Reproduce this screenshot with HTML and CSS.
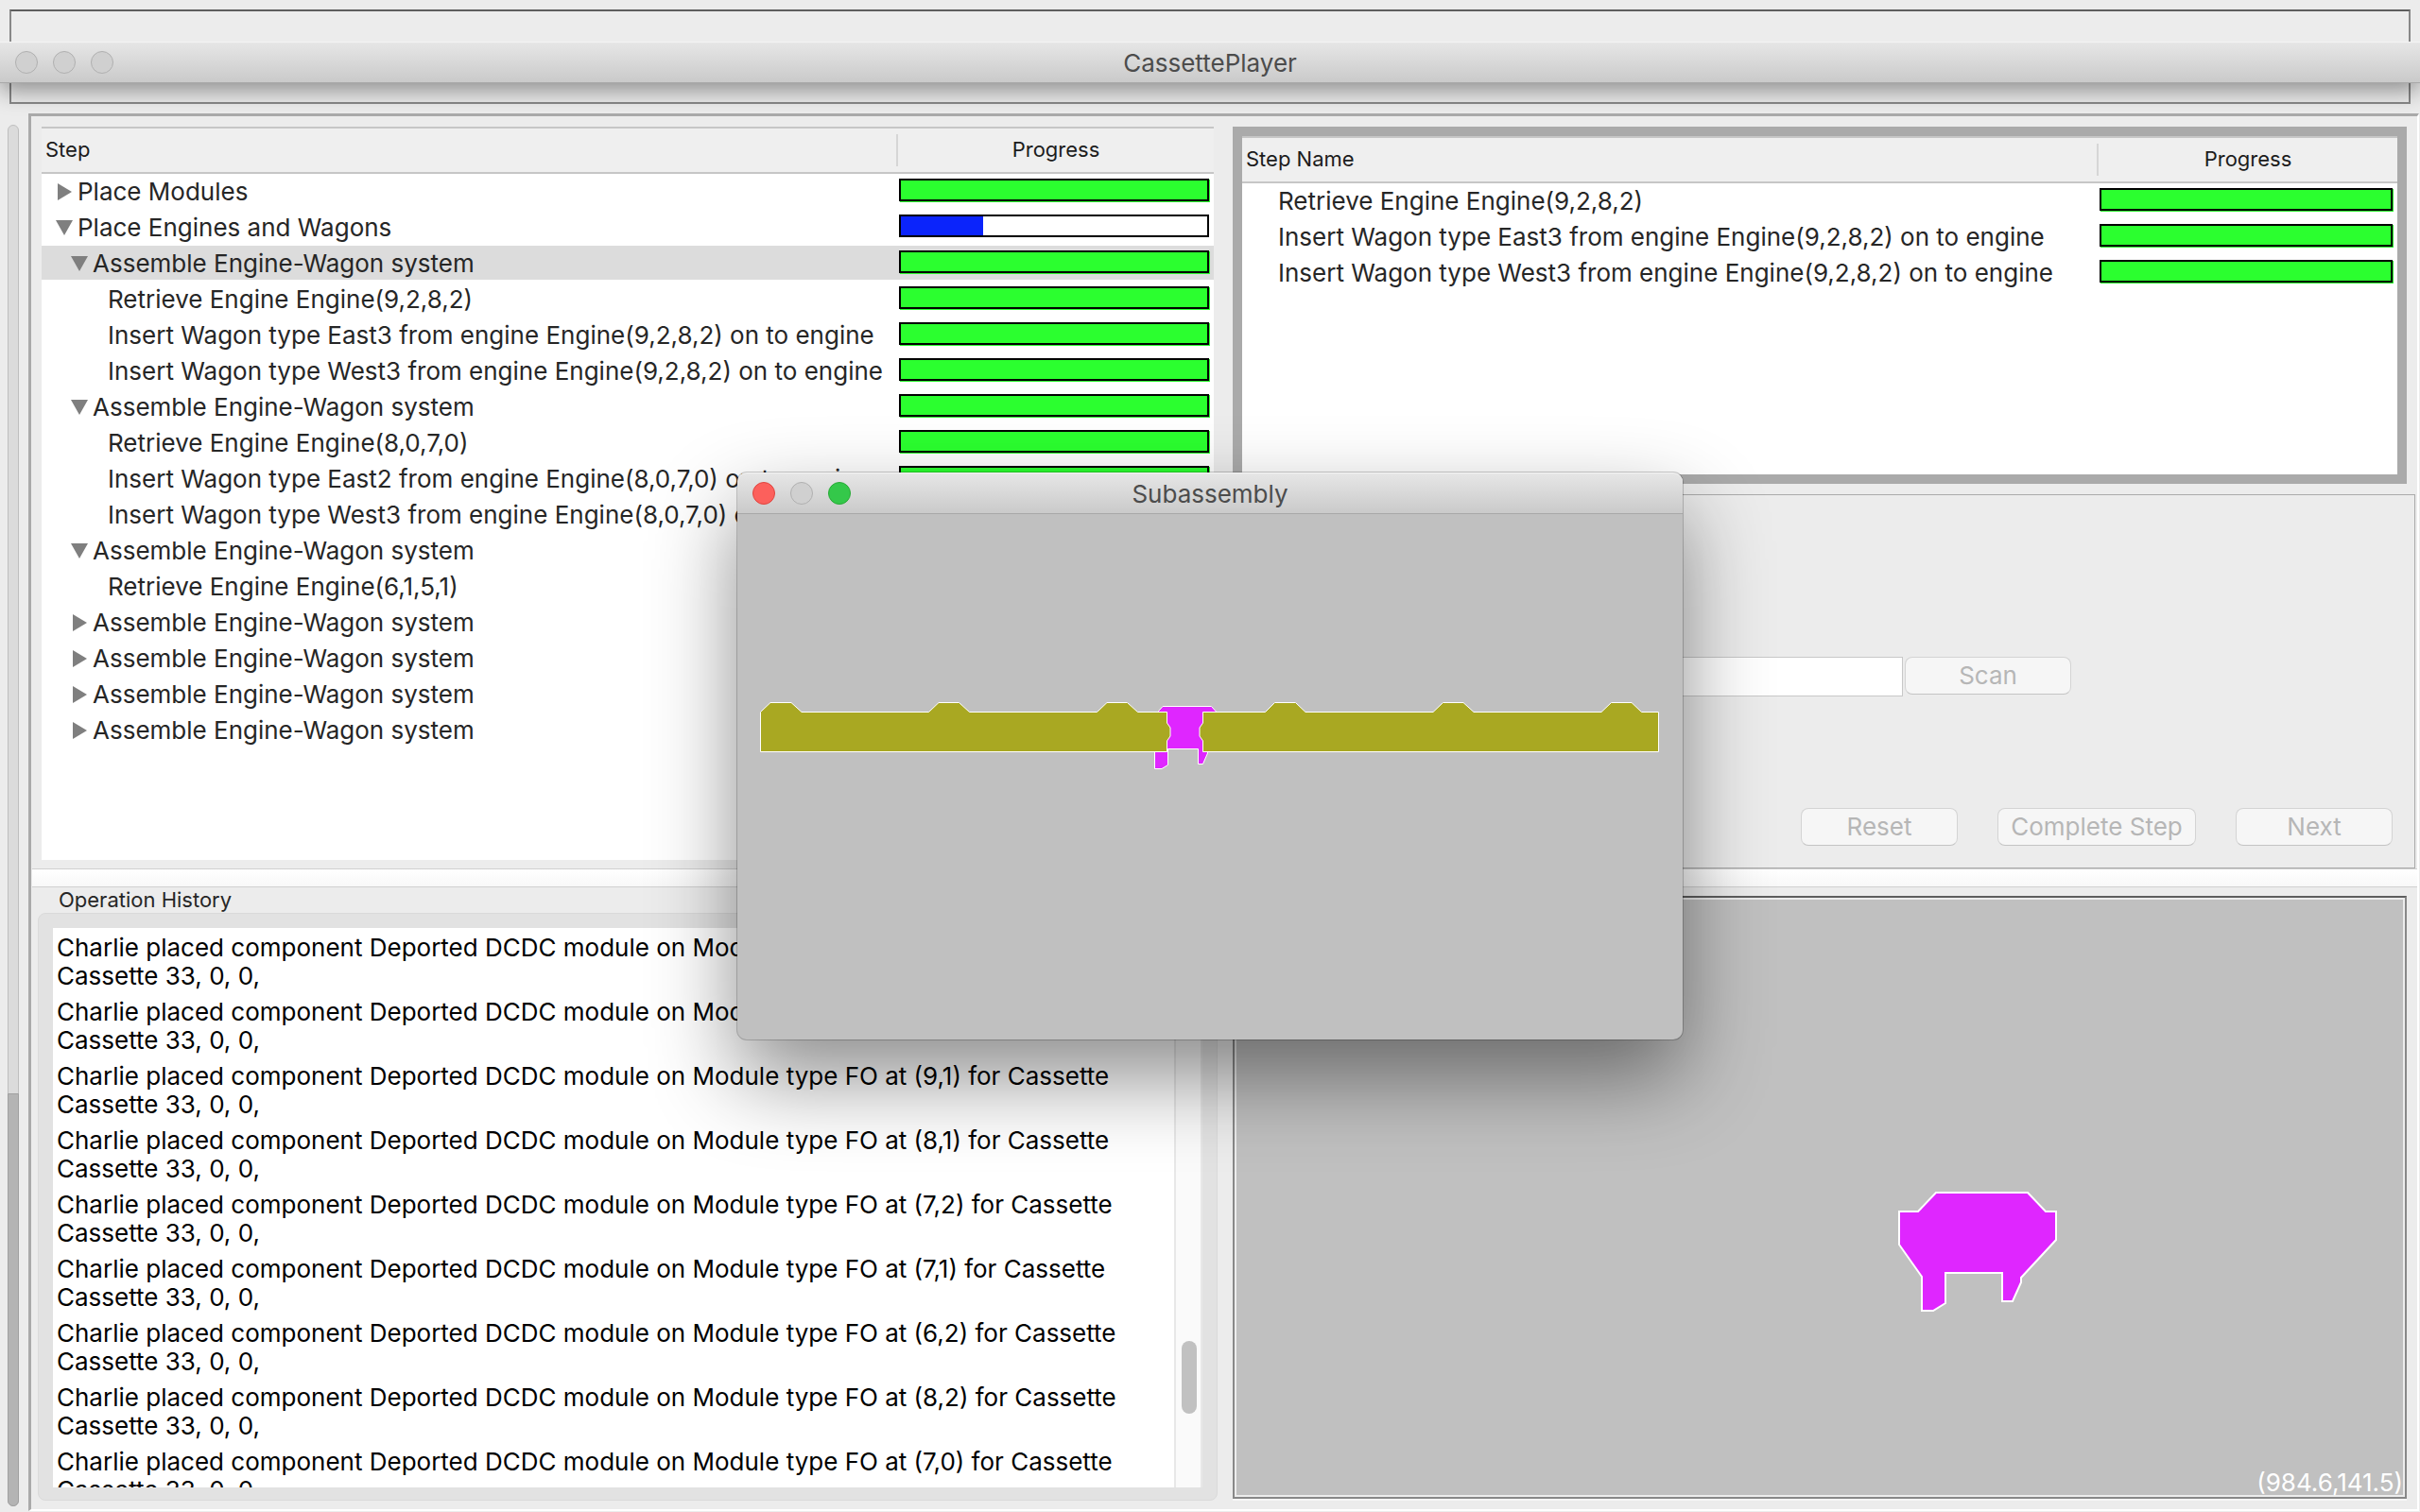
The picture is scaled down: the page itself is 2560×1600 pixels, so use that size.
FILE: index.html
```html
<!DOCTYPE html>
<html lang="en">
<head>
<meta charset="utf-8">
<title>CassettePlayer</title>
<link rel="stylesheet" href="styles.css">
</head>
<body>
<header class="titlebar app-title">
  <div class="lights"><span class="light"></span><span class="light"></span><span class="light"></span></div>
  <h1 class="title">CassettePlayer</h1>
</header>
<div class="top-frame"></div>
<div class="workspace">
  <div class="page-scroll"><div class="page-thumb"></div></div>
  <main class="main">
    <section class="tree-pane">
      <table class="steps">
        <colgroup><col><col class="col-left"></colgroup>
        <thead><tr><th>Step</th><th class="progress-head"><div>Progress</div></th></tr></thead>
        <tbody id="tree"></tbody>
      </table>
    </section>
    <section class="right-pane">
      <div class="step-box">
        <table class="steps">
          <colgroup><col><col class="col-right"></colgroup>
          <thead><tr><th>Step Name</th><th class="progress-head"><div>Progress</div></th></tr></thead>
          <tbody id="current"></tbody>
        </table>
      </div>
      <div class="controls">
        <div class="scan-row">
          <input class="scan-input" type="text" aria-label="Barcode" disabled>
          <button class="btn scan" disabled>Scan</button>
        </div>
        <div class="action-row">
          <button class="btn" disabled>Reset</button>
          <button class="btn wide" disabled>Complete Step</button>
          <button class="btn" disabled>Next</button>
        </div>
      </div>
    </section>
    <div class="splitter"></div>
    <section class="history">
      <h2 class="history-title">Operation History</h2>
      <div class="history-box">
        <ul class="log" id="log"></ul>
        <div class="log-scroll"><div class="log-space"></div><div class="log-thumb"></div></div>
      </div>
    </section>
    <section class="view">
      <svg class="scene" viewBox="-2 -2 1238 634">
        <polygon class="engine bold" points="740,310 837,310 856,330 867,330 867,360 830,400 830,405 821,425 810,425 810,395 750,395 750,427 737,435 725,435 725,399 701,365 701,330 721,330"/>
      </svg>
      <output class="coords">(984.6,141.5)</output>
    </section>
  </main>
</div>
<div class="window">
  <div class="titlebar window-title">
    <div class="lights"><span class="light red"></span><span class="light"></span><span class="light green"></span></div>
    <h2 class="title">Subassembly</h2>
  </div>
  <svg class="canvas" viewBox="0 0 1000 556">
    <polygon class="engine" points="445.5,208.5 450,203.5 501.5,203.5 506,208.5 506,220 497.5,240 497.5,253 492.5,264.5 487.5,264.5 487.5,248.5 455.5,248.5 455.5,265.5 449,269.5 441.5,269.5 441.5,240 445.5,220"/>
    <polygon class="wagon" points="24.5,209.5 35,199.5 57,199.5 68,209.5 202.5,209.5 213,199.5 234.5,199.5 245.5,209.5 380.5,209.5 391,199.5 412.5,199.5 423.5,209.5 454.5,209.5 454.5,221 458,226 458,235 454.5,240 454.5,251.5 24.5,251.5"/>
    <polygon class="wagon" points="492.5,209.5 558.5,209.5 568.5,199.5 590.5,199.5 601,209.5 736,209.5 746.5,199.5 768,199.5 779,209.5 914,209.5 924.5,199.5 946,199.5 956.5,209.5 974.5,209.5 974.5,251.5 492.5,251.5 492.5,240 489,235 489,226 492.5,221"/>
  </svg>
</div>
<script src="app.js"></script>
</body>
</html>
```
FILE: styles.css
```css
* { box-sizing: border-box; }
body {
  margin: 0;
  height: 100vh;
  display: flex;
  flex-direction: column;
  overflow: hidden;
  background: #ececec;
  color: #262626;
  font: 26px/30px Inter, "Liberation Sans", sans-serif;
}
h1, h2 { margin: 0; font-size: inherit; font-weight: 400; }

/* Title bars */
.titlebar {
  display: grid;
  align-items: center;
  height: 44px;
  background: linear-gradient(#e6e6e6, #cacaca);
  border-top: 1px solid #f4f4f4;
  border-bottom: 1px solid #a8a8a8;
}
.titlebar > * { grid-area: 1 / 1; }
.title { padding-top: 2px; text-align: center; color: #4c4c4c; }
.lights { display: flex; gap: 16px; padding-left: 16px; }
.light { width: 24px; height: 24px; border-radius: 50%; border: 1px solid #b0b0b0; background: #d0d0d0; }
.light.red { background: #fc605c; border-color: #e0443e; }
.light.green { background: #34c84a; border-color: #27aa35; }
.app-title {
  position: absolute;
  top: 44px;
  left: 0;
  right: 0;
  box-shadow: 0 8px 24px rgba(0, 0, 0, .4);
  clip-path: inset(0 0 -40px 0);
}

.top-frame {
  height: 100px;
  margin: 10px 10px 0;
  border: 2px solid #888;
  border-top-color: #5e5e5e;
  flex: none;
}
.workspace { flex: 1; min-height: 0; display: flex; gap: 10px; padding: 10px 1px 1px 8px; }
.page-scroll {
  display: grid;
  grid-template-rows: 1025fr 437fr;
  width: 12px;
  margin: 12px 0 5px;
  border: 1px solid #bebebe;
  border-radius: 6px;
  background: #dbdbdb;
}
.page-thumb { grid-row: 2; margin: 0 -1px -1px; border: 1px solid #a0a0a0; border-radius: 0 0 6px 6px; background: #b4b4b4; }

.main {
  flex: 1;
  min-width: 0;
  display: grid;
  grid-template-columns: 1261fr 1263fr;
  grid-template-rows: 796fr 20px 658fr;
  border: 3px solid #aaa;
  border-right: 2px solid #fff;
  border-bottom: 2px solid #fff;
}
.tree-pane { margin: 11px 10px 9px 11px; background: #fff; overflow: hidden; }
.right-pane { display: grid; grid-template-rows: 400fr 396fr; min-height: 0; padding-right: 2px; }
.step-box { margin: 11px 9px 11px 10px; border: 10px solid #aaa; background: #fff; }

/* Step tables */
.steps { width: 100%; border-collapse: separate; border-spacing: 0; table-layout: fixed; }
.col-left { width: 336px; }
.col-right { width: 318px; }
.steps th {
  height: 50px;
  padding: 0 4px 2px;
  text-align: left;
  font-size: 22px;
  font-weight: 400;
  color: #1c1c1c;
  background: #efefef;
  border: solid #c6c6c6;
  border-width: 2px 0;
}
.steps .progress-head { padding: 0; text-align: center; }
.progress-head div { height: 34px; border-left: 2px solid #d6d6d6; line-height: 32px; }
.steps td { height: 38px; padding: 0; white-space: nowrap; }
.steps td.bar-cell { padding: 5px 5px 9px 3px; }
.selected td { background: linear-gradient(#dcdcdc, #dcdcdc) no-repeat 0 0 / 100% 36px; }
.item { display: flex; align-items: center; gap: 5px; }
.level0 { padding-left: 15px; }
.level1 { padding-left: 31px; }
.level2 { padding-left: 47px; }
.twisty { width: 18px; height: 18px; padding: 0; border: 0; background: none; flex: none; }
.twisty svg { display: block; fill: #7f7f7f; }
.bar { height: 24px; border: 2px solid #000; box-shadow: 1px 1px #2bff2f; }
.bar.partial { box-shadow: none; }
.fill { height: 100%; background: #2bff2f; }
.partial .fill { background: #0b24fb; }

/* Step controls */
.controls {
  display: flex;
  flex-direction: column;
  justify-content: space-between;
  padding: 171px 23px 23px 20px;
  border: 1px solid #aaa;
}
.scan-row { display: flex; gap: 2px; padding-right: 340px; }
.scan-input { flex: 1; min-width: 0; height: 42px; border: 1px solid #c8c8c8; background: #fff; }
.action-row { display: flex; justify-content: flex-end; gap: 42px; }
.btn {
  width: 166px;
  height: 40px;
  padding: 0;
  font: inherit;
  color: #b6b6b6;
  background: #f6f6f6;
  border: 1px solid #d4d4d4;
  border-bottom-color: #c4c4c4;
  border-radius: 8px;
}
.btn.scan { width: 176px; }
.btn.wide { width: 210px; }

.splitter {
  grid-column: 1 / 3;
  margin-left: 1px;
  background: linear-gradient(#fff, #f8f8f8);
  border: solid #d0d0d0;
  border-width: 1px 0;
}

/* Operation history */
.history { display: flex; flex-direction: column; min-height: 0; padding: 0 6px 9px 7px; }
.history-title { padding: 0 22px; font-size: 22px; line-height: 27px; }
.history-box {
  flex: 1;
  min-height: 0;
  display: flex;
  padding: 15px 15px 13px;
  border: 1px solid #dadada;
  border-radius: 8px;
  background: #e2e2e2;
}
.log {
  flex: 1;
  margin: 0;
  padding: 2px 4px;
  list-style: none;
  overflow: hidden;
  background: #fff;
  color: #000;
}
.log li { padding: 4px 0; }
.log-scroll {
  display: grid;
  grid-template-rows: 437fr 77fr 78fr;
  width: 30px;
  padding: 0 4px 0 6px;
  border: 2px solid #e8e8e8;
  border-width: 0 2px;
  background: #fafafa;
}
.log-thumb { border-radius: 8px; background: #c1c1c1; }

/* Component view */
.view {
  position: relative;
  min-height: 0;
  margin: 9px 11px 11px 10px;
  border: 2px solid #888;
  border-top-color: #5e5e5e;
  background: #c0c0c0;
  outline: 2px solid #ececec;
  outline-offset: -4px;
  box-shadow: 0 2px #f6f6f6;
}
.scene { display: block; width: 100%; height: 100%; }
.coords { position: absolute; right: 2px; bottom: 0; color: #fff; }
.engine, .wagon { fill: #df26ff; stroke: #fff; }
.wagon { fill: #a9a822; }
.bold { stroke-width: 2; }

/* Floating window */
.window {
  position: absolute;
  left: 780px;
  top: 500px;
  width: 1000px;
  border-radius: 10px;
  background: #c0c0c0;
  box-shadow: 0 0 0 1px rgba(0, 0, 0, .2), 0 40px 90px rgba(0, 0, 0, .45);
}
.window-title { border-radius: 10px 10px 0 0; }
.canvas { display: block; width: 100%; height: auto; }
```
FILE: app.js
```js
const system = "Assemble Engine-Wagon system";
const steps = [
  [0, "closed", "Place Modules", 100],
  [0, "open", "Place Engines and Wagons", 27],
  [1, "open", system, 100, "selected"],
  [2, "", "Retrieve Engine Engine(9,2,8,2)", 100],
  [2, "", "Insert Wagon type East3 from engine Engine(9,2,8,2) on to engine", 100],
  [2, "", "Insert Wagon type West3 from engine Engine(9,2,8,2) on to engine", 100],
  [1, "open", system, 100],
  [2, "", "Retrieve Engine Engine(8,0,7,0)", 100],
  [2, "", "Insert Wagon type East2 from engine Engine(8,0,7,0) on to engine", 100],
  [2, "", "Insert Wagon type West3 from engine Engine(8,0,7,0) on to engine", 100],
  [1, "open", system, 100],
  [2, "", "Retrieve Engine Engine(6,1,5,1)", 100],
  [1, "closed", system, 0],
  [1, "closed", system, 0],
  [1, "closed", system, 0],
  [1, "closed", system, 0]
];
const arrows = { open: "M0 1H18L9 17Z", closed: "M2 0V18L17 9Z" };

function row([level, state, name, done, cls = ""]) {
  const twisty = state
    ? `<button class="twisty" aria-label="Toggle ${name}"><svg width="18" height="18"><path d="${arrows[state]}"/></svg></button>`
    : `<span class="twisty"></span>`;
  return `<tr class="${cls}"><td><div class="item level${level}">${twisty}${name}</div></td>
    <td class="bar-cell"><div class="bar ${done < 100 ? "partial" : ""}"><div class="fill" style="width:${done}%"></div></div></td></tr>`;
}

document.getElementById("tree").innerHTML = steps.map(row).join("");
document.getElementById("current").innerHTML = steps.slice(3, 6).map(s => row([0, ...s.slice(1)])).join("");
document.getElementById("log").innerHTML = ["9,2", "8,2", "9,1", "8,1", "7,2", "7,1", "6,2", "8,2", "7,0"]
  .map(p => `<li>Charlie placed component Deported DCDC module on Module type FO at (${p}) for Cassette<br>Cassette 33, 0, 0,</li>`).join("");
```
